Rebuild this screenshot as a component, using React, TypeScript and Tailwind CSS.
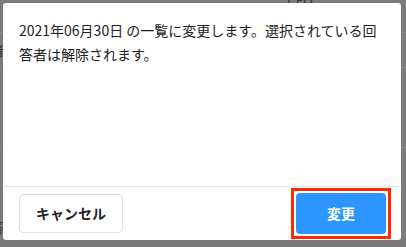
export default function App() {
  return (
    <div
      className="relative w-[406px] h-[247px] overflow-hidden bg-[#7b7b7b]"
      style={{ fontFamily: '"Noto Sans CJK JP", "Noto Sans", sans-serif' }}
    >
      {/* page behind the overlay */}
      <div className="flex flex-col text-[13px] text-[#333] -mt-[9px]">
        <div className="h-[42px] flex justify-end pr-[93px] border-b border-[#868686]">
          <span>CEO</span>
        </div>
        <div className="h-[35px] flex items-center -ml-[9px] border-b border-[#868686]">者</div>
        <div className="h-[80px] border-b border-[#868686]" />
        <div className="h-[88px] flex items-end -ml-[9px]">答</div>
      </div>

      {/* modal */}
      <div className="absolute left-[3px] top-[3px] w-[398px] h-[237px] bg-white rounded-[3px] flex flex-col">
        <div className="flex-1 px-4 pt-[15px] text-[14px] leading-[24px] text-[#222]">
          2021年06月30日 の一覧に変更します。選択されている回答者は解除されます。
        </div>
        <div className="h-px bg-[#e3e6ea]" />
        <div className="h-[53px] flex items-center justify-between pl-4 pr-[10px]">
          <button className="w-[104px] h-[39px] rounded-[4px] border border-[#dcdfe3] bg-white text-[14px] font-bold text-[#222]">
            キャンセル
          </button>
          <div className="border-[3px] border-[#ff2a00] p-[2px]">
            <button className="w-[90px] h-[41px] rounded-[4px] bg-[#2d96fe] text-white text-[14px] font-bold">
              変更
            </button>
          </div>
        </div>
      </div>
    </div>
  )
}
